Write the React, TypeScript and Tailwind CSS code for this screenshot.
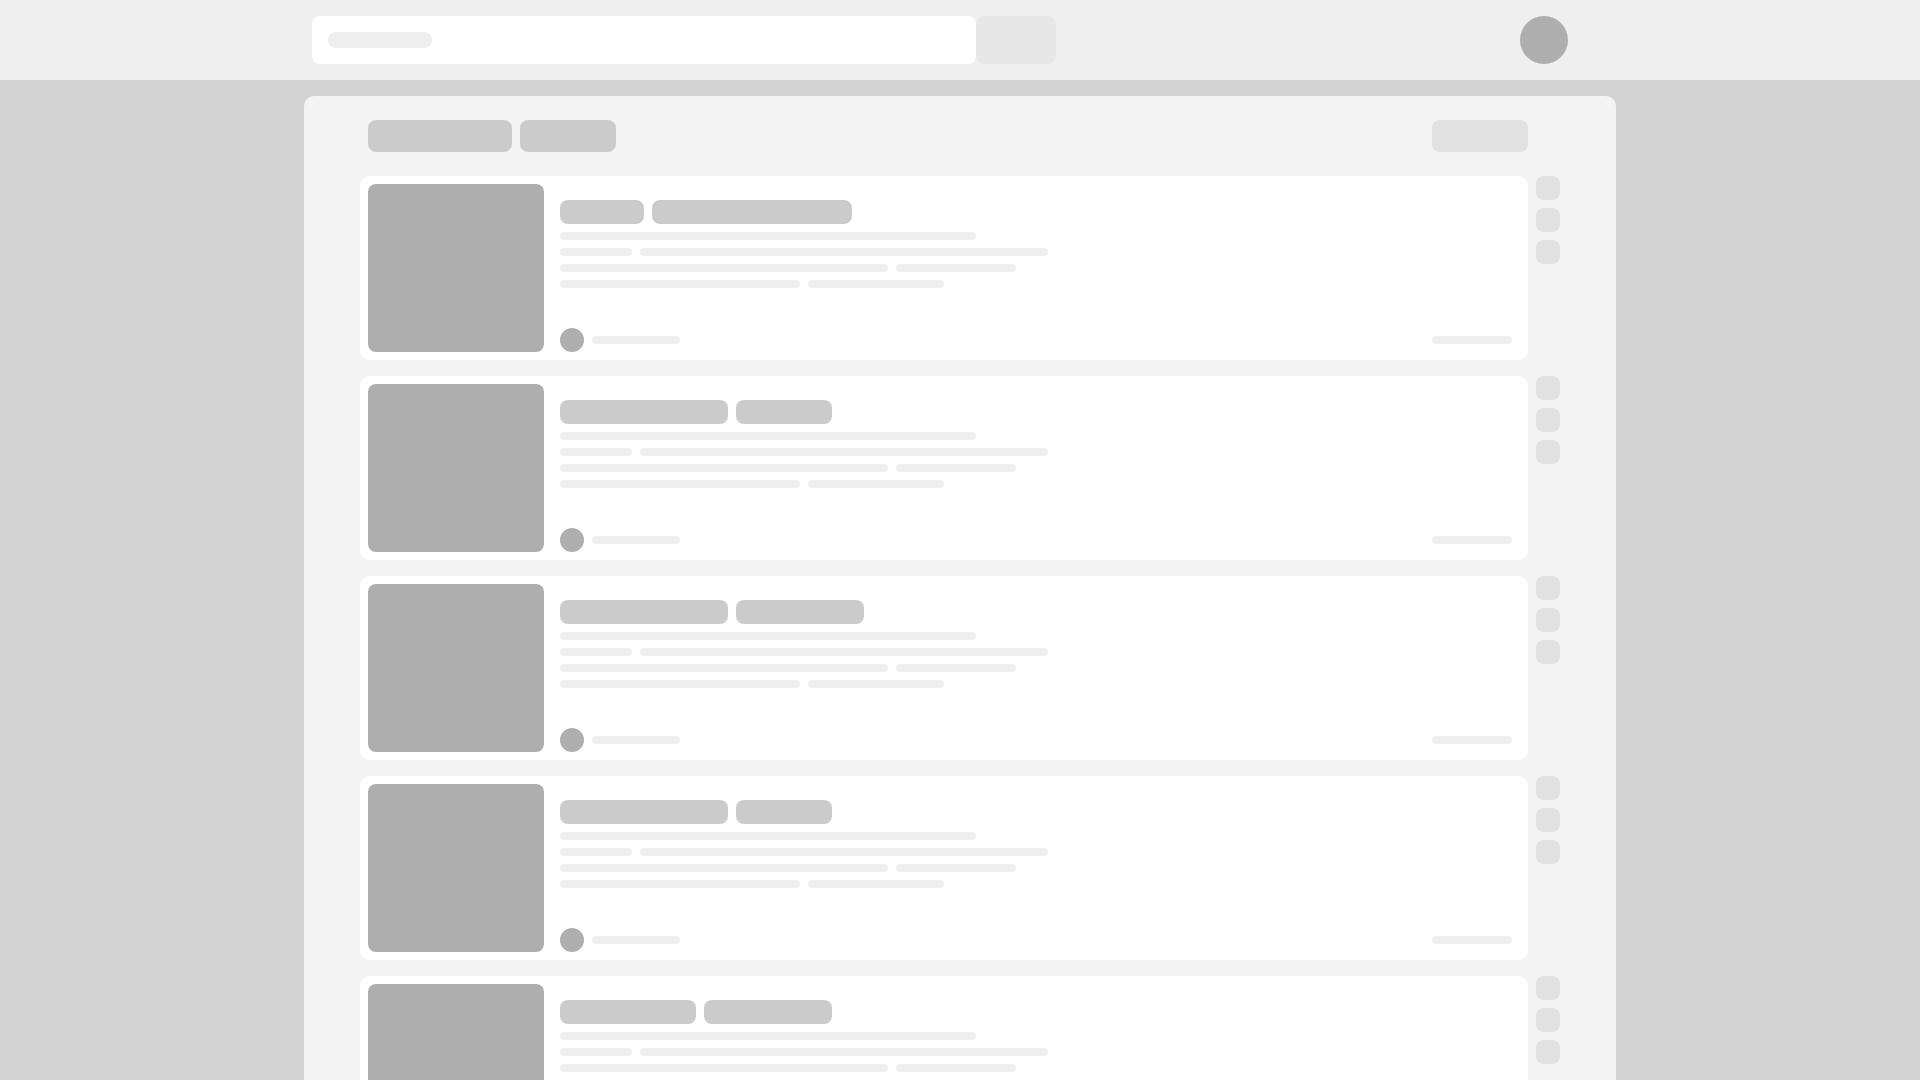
import React from 'react';

type Row = { chips: [number, number] };

const rows: Row[] = [
  { chips: [84, 200] },
  { chips: [168, 96] },
  { chips: [168, 128] },
  { chips: [168, 96] },
  { chips: [136, 128] },
  { chips: [168, 96] },
];

// pill line rows inside each card (widths in px)
const lines: number[][] = [
  [416],
  [72, 408],
  [328, 120],
  [240, 136],
];

const Pill = ({ w }: { w: number }) => (
  <div className="h-2 rounded-full bg-[#eeeeee]" style={{ width: w }} />
);

const SkeletonCard = ({ row }: { row: Row }) => (
  <div className="flex gap-2">
    <div className="flex flex-1 gap-4 rounded-[10px] bg-white p-2">
      <div className="h-[168px] w-[176px] shrink-0 rounded-lg bg-[#aeaeae]" />
      <div className="flex flex-1 flex-col justify-between pt-4 pr-2">
        <div>
          <div className="flex gap-2">
            <div className="h-6 rounded-lg bg-[#cbcbcb]" style={{ width: row.chips[0] }} />
            <div className="h-6 rounded-lg bg-[#cbcbcb]" style={{ width: row.chips[1] }} />
          </div>
          <div className="mt-2 flex flex-col gap-2">
            {lines.map((line, i) => (
              <div key={i} className="flex gap-2">
                {line.map((w, j) => (
                  <Pill key={j} w={w} />
                ))}
              </div>
            ))}
          </div>
        </div>
        <div className="flex items-center justify-between">
          <div className="flex items-center gap-2">
            <div className="h-6 w-6 rounded-full bg-[#aeaeae]" />
            <div className="h-2 w-[88px] rounded-full bg-[#eeeeee]" />
          </div>
          <div className="h-2 w-20 rounded-full bg-[#eeeeee]" />
        </div>
      </div>
    </div>
    <div className="flex w-6 flex-col gap-2">
      <div className="h-6 w-6 rounded-lg bg-[#e1e1e1]" />
      <div className="h-6 w-6 rounded-lg bg-[#e1e1e1]" />
      <div className="h-6 w-6 rounded-lg bg-[#e1e1e1]" />
    </div>
  </div>
);

const App = () => {
  return (
    <div className="flex h-screen flex-col overflow-hidden bg-[#d3d3d3]">
      <header className="h-20 shrink-0 bg-[#efefef]">
        <div className="mx-auto flex h-full w-[1312px] items-center pl-2 pr-12">
          <div className="flex h-12 w-[664px] items-center rounded-lg bg-white px-4">
            <div className="h-4 w-[104px] rounded-full bg-[#eeeeee]" />
          </div>
          <div className="h-12 w-20 rounded-lg bg-[#e7e7e7]" />
          <div className="flex-1" />
          <div className="h-12 w-12 rounded-full bg-[#aeaeae]" />
        </div>
      </header>

      <main className="flex-1 overflow-hidden pt-4">
        <div className="mx-auto min-h-full w-[1312px] rounded-t-[10px] bg-[#f4f4f4] px-14 pt-6 pb-10">
          <div className="flex w-[1168px] items-center justify-between pl-2">
            <div className="flex gap-2">
              <div className="h-8 w-36 rounded-lg bg-[#cbcbcb]" />
              <div className="h-8 w-24 rounded-lg bg-[#cbcbcb]" />
            </div>
            <div className="h-8 w-24 rounded-lg bg-[#e1e1e1]" />
          </div>

          <div className="mt-6 flex flex-col gap-4">
            {rows.map((row, i) => (
              <SkeletonCard key={i} row={row} />
            ))}
          </div>
        </div>
      </main>
    </div>
  );
};

export default App;
